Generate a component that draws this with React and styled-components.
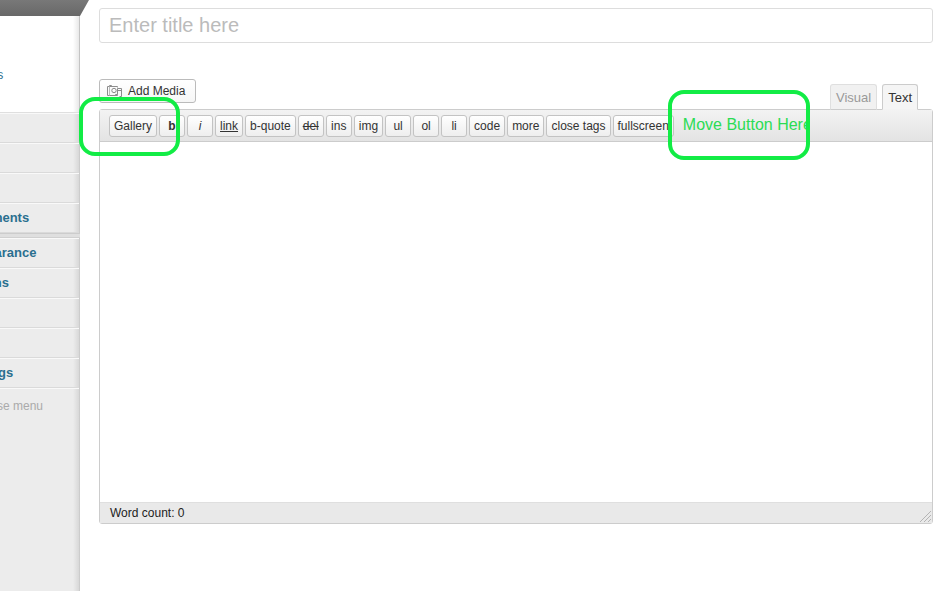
import React, { useState } from 'react'
import styled, { createGlobalStyle } from 'styled-components';


const colors = {
    link: '#2a6f8f',
    text: '#333333',
    border: '#cccccc',
    sidebar: '#ececec',
    mark: '#12ec45',
};

const quicktags = [
    { label: 'Gallery' },
    { label: 'b', look: 'font-weight: bold;' },
    { label: 'i', look: 'font-style: italic;' },
    { label: 'link', look: 'text-decoration: underline;' },
    { label: 'b-quote' },
    { label: 'del', look: 'text-decoration: line-through;' },
    { label: 'ins' },
    { label: 'img' },
    { label: 'ul' },
    { label: 'ol' },
    { label: 'li' },
    { label: 'code' },
    { label: 'more' },
    { label: 'close tags' },
    { label: 'fullscreen' },
];

const topItems = ['', '', '', 'Comments'];
const bottomItems = ['Appearance', 'Plugins', '', '', 'Settings'];


const MenuItems = ({ items }) => (
    <MenuList>
        {items.map((item, index) => (
            <MenuItem key={index}>
                {item && <MenuLink href="#">{item}</MenuLink>}
            </MenuItem>
        ))}
    </MenuList>
)

const MediaIcon = () => (
    <svg width="16" height="14" viewBox="0 0 16 14" fill="none" stroke="#8c8c8c" aria-hidden="true">
        <path d="M2.5 2.5v-1h2v1M10.5 3.5v-1h-10v9h9" />
        <path d="M2.5 2.5v9" stroke="#bbbbbb" />
        <circle cx="7" cy="6.5" r="2.2" />
        <path d="M10.5 10.5v-6h4v8M10.5 6.5h4" />
        <path d="M8.5 10.5h2v1h-2zM12.5 12.5h2" />
    </svg>
)

export default function App() {

    const [tab, setTab] = useState('Text')

    return (
        <Page>
            <GlobalStyle />
            <Sidebar>
                <CurrentMenu />
                <Submenu>
                    <SubmenuLink href="#">Tags</SubmenuLink>
                </Submenu>
                <MenuItems items={topItems} />
                <Separator />
                <MenuItems items={bottomItems} />
                <Collapse type="button">Collapse menu</Collapse>
            </Sidebar>

            <Main>
                <TitleInput type="text" placeholder="Enter title here" aria-label="Title" />
                <EditorTools>
                    <MediaButton type="button">
                        <MediaIcon />
                        Add Media
                    </MediaButton>
                    <Tabs>
                        {['Visual', 'Text'].map((name) => (
                            <Tab key={name} type="button" $active={tab === name} onClick={() => setTab(name)}>
                                {name}
                            </Tab>
                        ))}
                    </Tabs>
                </EditorTools>
                <Editor>
                    <Toolbar>
                        {quicktags.map(({ label, look }) => (
                            <TagButton key={label} type="button" $look={look}>{label}</TagButton>
                        ))}
                        <Note>Move Button Here</Note>
                    </Toolbar>
                    <Content aria-label="Content" />
                    <StatusBar>
                        Word count: 0
                        <svg width="12" height="12" viewBox="0 0 12 12" stroke="#b4b4b4" aria-hidden="true">
                            <path d="M0 11L11 0M4 11L11 4M8 11L11 8" />
                        </svg>
                    </StatusBar>
                    <Mark $left={-21} $top={-13} $width={101} $height={59} />
                    <Mark $left={568} $top={-20} $width={142} $height={70} />
                </Editor>
            </Main>
        </Page>
    )
}


const GlobalStyle = createGlobalStyle`
    *{
        box-sizing: border-box;
    }

    body{
        margin: 0;
        background-color: #ffffff;
        color: ${colors.text};
        font-family: "Liberation Sans", Arial, sans-serif;
        font-size: 12px;
    }

    button, input, textarea{
        font-family: inherit;
    }
`;

const Page = styled.div`
    display: grid;
    grid-template-columns: 80px minmax(0, 1fr);
    min-height: 100vh;
    overflow: hidden;
`;

const Sidebar = styled.nav`
    display: flex;
    flex-direction: column;
    background-color: ${colors.sidebar};
    background-image: linear-gradient(to left, #cccccc 1px, #d8d8d8 1px, rgba(236, 236, 236, 0) 7px);
`;

const CurrentMenu = styled.div`
    width: 89px;
    height: 16px;
    background: linear-gradient(#787878, #686868);
    clip-path: polygon(0 0, 100% 0, 80px 100%, 0 100%);
`;

const Submenu = styled.div`
    display: flex;
    align-items: center;
    height: 97px;
    padding-top: 22px;
    background: linear-gradient(to left, #c4c4c4 1px, #e8e8e8 1px, #ffffff 7px);
    border-bottom: 1px solid #dfdfdf;
    overflow: hidden;
`;

const SubmenuLink = styled.a`
    margin-left: -22px;
    color: ${colors.link};
    text-decoration: none;
`;

const MenuList = styled.ul`
    margin: 0;
    padding: 0;
    list-style: none;
    overflow: hidden;
`;

const MenuItem = styled.li`
    height: 30px;
    border-top: 1px solid #f9f9f9;
    border-bottom: 1px solid #dadada;
    margin-right: 1px;
`;

const MenuLink = styled.a`
    display: block;
    margin-left: -38px;
    color: ${colors.link};
    font-size: 13px;
    font-weight: bold;
    line-height: 28px;
    text-decoration: none;
`;

const Separator = styled.div`
    height: 5px;
    background-color: #dfdfdf;
    border-top: 1px solid #cccccc;
    border-bottom: 1px solid #d0d0d0;
`;

const Collapse = styled.button`
    height: 34px;
    margin-right: 1px;
    padding: 0;
    border: none;
    border-top: 1px solid #f9f9f9;
    background: none;
    color: #aaaaaa;
    font-size: 12px;
    text-align: left;
    text-indent: -37px;
    white-space: nowrap;
    overflow: hidden;
`;

const Main = styled.main`
    padding: 8px 12px 24px 19px;
`;

const TitleInput = styled.input`
    display: block;
    width: 100%;
    height: 35px;
    padding: 0 9px;
    border: 1px solid #dddddd;
    border-radius: 3px;
    font-size: 20px;
    outline: none;

    &::placeholder{
        color: #bbbbbb;
        opacity: 1;
    }
`;

const EditorTools = styled.div`
    display: flex;
    justify-content: space-between;
    align-items: flex-start;
    padding: 36px 15px 0 0;
`;

const MediaButton = styled.button`
    display: flex;
    align-items: center;
    gap: 5px;
    height: 24px;
    padding: 0 10px 0 7px;
    border: 1px solid #bbbbbb;
    border-radius: 3px;
    background: linear-gradient(#ffffff, #f6f6f6);
    color: ${colors.text};
    font-size: 12px;
`;

const Tabs = styled.div`
    display: flex;
    gap: 5px;
    padding-top: 5px;
`;

const Tab = styled.button`
    position: relative;
    z-index: 1;
    height: 26px;
    margin-bottom: -1px;
    padding: 0 5px;
    border: 1px solid ${({ $active }) => ($active ? '#cccccc' : '#dfdfdf')};
    border-bottom-color: ${({ $active }) => ($active ? '#f3f3f3' : '#cccccc')};
    border-radius: 3px 3px 0 0;
    background-color: ${({ $active }) => ($active ? '#f5f5f5' : '#f1f1f1')};
    color: ${({ $active }) => ($active ? '#333333' : '#999999')};
    font-size: 13px;
`;

const Editor = styled.section`
    position: relative;
    border: 1px solid ${colors.border};
    border-radius: 3px;
`;

const Toolbar = styled.div`
    display: flex;
    align-items: center;
    gap: 2px;
    height: 32px;
    padding: 0 9px;
    border-bottom: 1px solid ${colors.border};
    background: linear-gradient(#f3f3f3, #e3e3e3);
    white-space: nowrap;
`;

const TagButton = styled.button`
    min-width: 26px;
    height: 22px;
    padding: 0 4px;
    border: 1px solid #c3c3c3;
    border-radius: 3px;
    background: linear-gradient(#ffffff, #eeeeee);
    color: ${colors.text};
    font-size: 12px;
    ${({ $look }) => $look}
`;

/* the note ends under the right side of its frame */
const Note = styled.span`
    width: 132px;
    padding: 0 0 2px 7px;
    color: #2bdc55;
    font-size: 16px;
    overflow: hidden;
`;

const Content = styled.textarea`
    display: block;
    width: 100%;
    height: 360px;
    padding: 10px;
    border: none;
    outline: none;
    resize: none;
`;

const StatusBar = styled.div`
    display: flex;
    justify-content: space-between;
    align-items: center;
    height: 21px;
    padding-left: 10px;
    border-top: 1px solid #dfdfdf;
    background-color: #e9e9e9;
    color: #222222;

    svg{
        align-self: flex-end;
    }
`;

/* hand drawn frame lying over the toolbar */
const Mark = styled.div`
    position: absolute;
    left: ${({ $left }) => $left}px;
    top: ${({ $top }) => $top}px;
    width: ${({ $width }) => $width}px;
    height: ${({ $height }) => $height}px;
    border: 4px solid ${colors.mark};
    border-radius: 16px;
    pointer-events: none;
`;
